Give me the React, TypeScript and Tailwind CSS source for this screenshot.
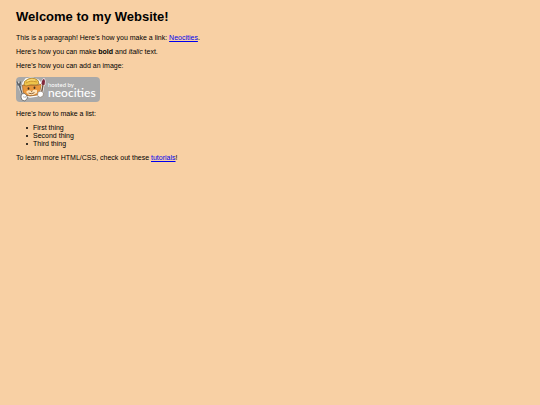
function HostedByNeocities() {
  return (
    <a
      href="#neocities"
      aria-label="Hosted by Neocities"
      className="relative block h-[25px] w-[84px] rounded-[4px] bg-[#a9a9a9] text-white no-underline"
    >
      <svg viewBox="0 0 32 26" className="absolute left-0 top-0 h-[26px] w-[32px]" aria-hidden="true">
        <path d="m2 6 5 12" stroke="#d4d4d4" strokeWidth="3" strokeLinecap="round" />
        <path d="m3 7 4 11" stroke="#5c6064" strokeWidth="1.8" strokeLinecap="round" />
        <path d="m1 4.5 1 3.500 2-.5.5-3" fill="none" stroke="#5c6064" strokeWidth="1.2" />
        <path d="m7 6-1 6 2 6 6 2 7-1 4-4 1-8-4-4-6-2-6 1Z" fill="#fff" stroke="#fff" strokeWidth="1.4" strokeLinejoin="round" />
        <path d="m6.500 8 .5 7 2 3 5 1 7-1 3-3 2-8-4 1Z" fill="#e9973c" stroke="#8a5520" strokeWidth=".7" />
        <path d="M10 15q2-3 5-1 4-2 6-1v3l-4 2h-4Z" fill="#ffe3b8" />
        <path d="M8 8q-1-4 4-6 4-2 8 0 3 1 3 5l-3 1q-5-1-10 1Z" fill="#efc44a" stroke="#98702a" strokeWidth=".7" />
        <path d="M10 6q4-3 11-1" fill="none" stroke="#c89430" strokeWidth=".9" />
        <path d="M11 4q4-2 8-1" fill="none" stroke="#ffe28a" strokeWidth="1" />
        <ellipse cx="12.5" cy="11.5" rx=".9" ry="1.2" fill="#49321e" />
        <ellipse cx="18.5" cy="10.8" rx=".9" ry="1.2" fill="#49321e" />
        <path d="m15 14 .7.7.8-.8m-4 2.200q3 1.500 6-.5" fill="none" stroke="#704317" strokeWidth=".8" />
        <path d="m28 1 1.500 3-.5 4-2 1-2-2 .5-3Z" fill="#81273b" stroke="#fff" strokeWidth=".7" />
        <path d="m27 8-1.500 8" stroke="#fff" strokeWidth="2.8" />
        <path d="m27 8-1.500 8" stroke="#70523c" strokeWidth="1.4" />
        <path d="M22 15q3.500-2 5.500 1l-.5 3-3 1.500-2.500-2Z" fill="#fff" stroke="#8a7867" strokeWidth=".6" />
        <path d="M5.500 17q3-1.500 5 1l1 3-2.500 3-3-1-1-3Z" fill="#fff" stroke="#5e5b58" strokeWidth=".7" />
        <path d="m7.500 19 .8 2m1-2v2" stroke="#999" strokeWidth=".6" />
      </svg>
      <span className="flex flex-col pl-8 pt-1 font-['Lato',sans-serif]">
        <span className="text-[6px] leading-[7px]">hosted by</span>
        <span className="text-[12px] font-medium leading-[9px]">neocities</span>
      </span>
    </a>
  );
}

const linkStyle = "text-[#0000ee] underline";
const itemStyle = "flex items-center gap-[5px] before:size-0.5 before:rounded-full before:bg-black";

export default function App() {
  return (
    <main className="min-h-screen bg-[#f8d0a4] px-4 py-2 font-['Liberation_Sans',Arial,sans-serif] text-[7px] leading-[8px] text-black">
      <h1 className="mb-2 text-[13px] font-bold leading-[18px]">Welcome to my Website!</h1>
      <div className="flex flex-col gap-1.5">
        <p>
          This is a paragraph! Here's how you make a link:{" "}
          <a href="#neocities" className={linkStyle}>Neocities</a>.
        </p>
        <p>
          Here's how you can make <strong>bold</strong> and <em>italic</em> text.
        </p>
        <p>Here's how you can add an image:</p>
        <div className="pb-0.5 pt-px">
          <HostedByNeocities />
        </div>
        <p>Here's how to make a list:</p>
        <ul className="pl-2.5">
          <li className={itemStyle}>First thing</li>
          <li className={itemStyle}>Second thing</li>
          <li className={itemStyle}>Third thing</li>
        </ul>
        <p>
          To learn more HTML/CSS, check out these{" "}
          <a href="#tutorials" className={linkStyle}>tutorials</a>!
        </p>
      </div>
    </main>
  );
}
